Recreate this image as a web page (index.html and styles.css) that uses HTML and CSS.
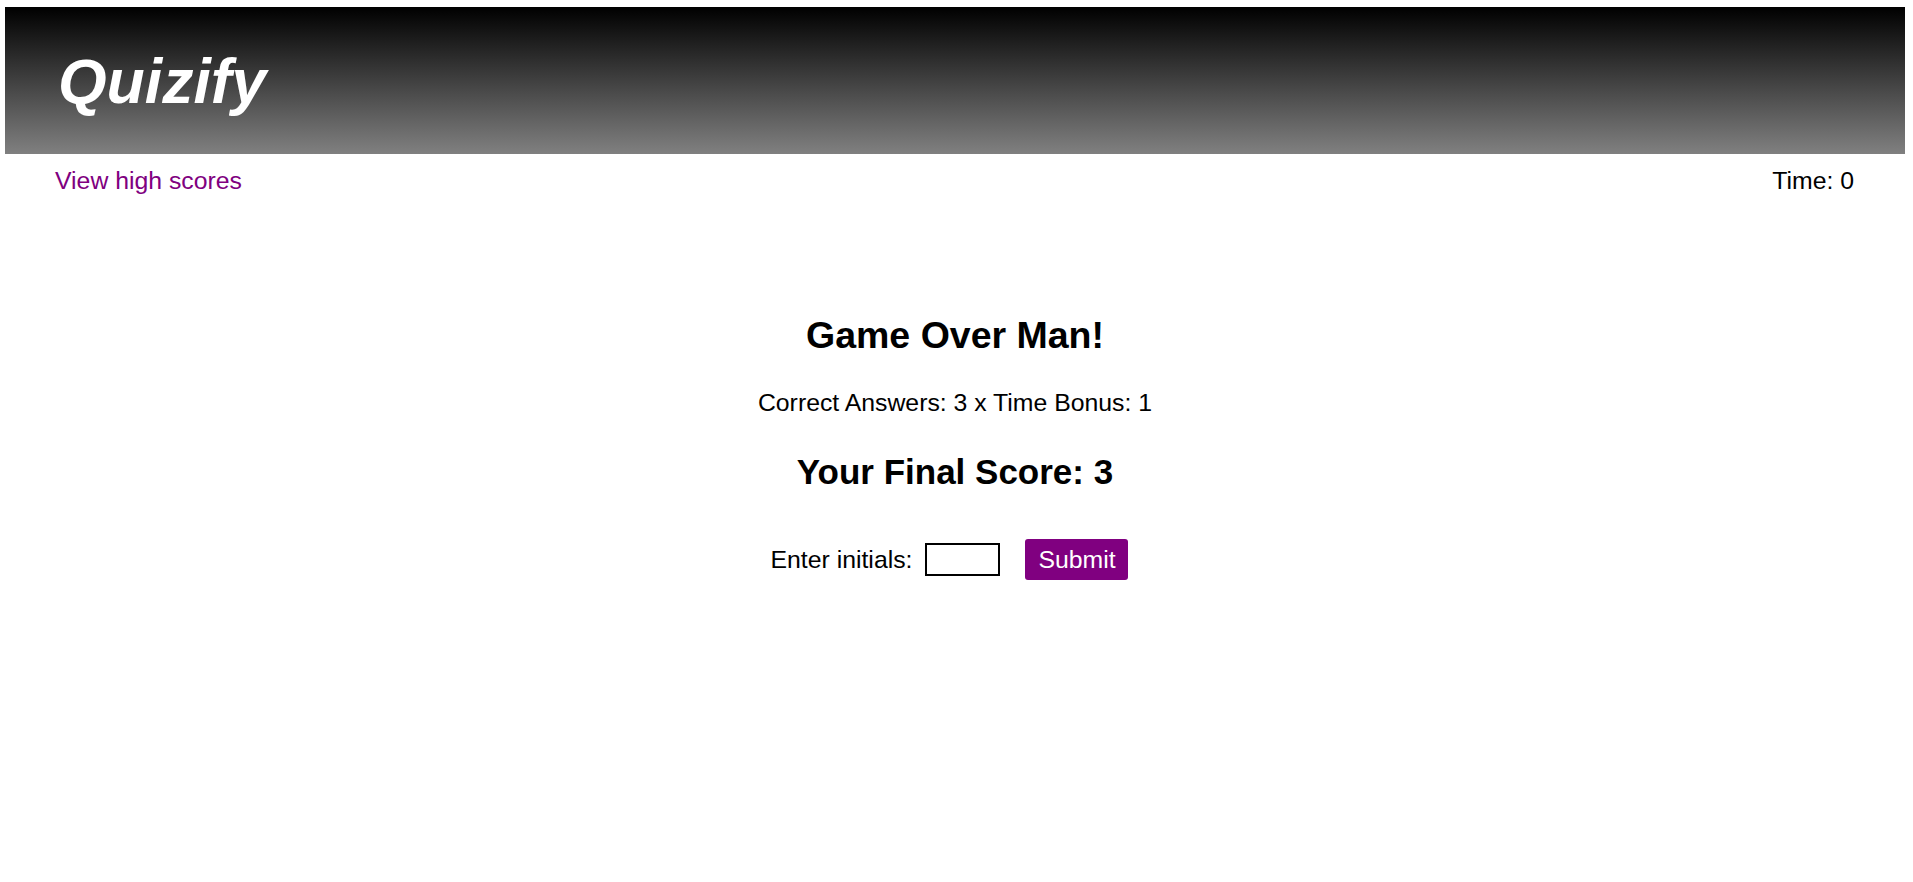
FILE: index.html
```html
<!DOCTYPE html>
<html lang="en">
<head>
<meta charset="utf-8">
<title>Quizify</title>
<link rel="stylesheet" href="styles.css">
</head>
<body>
<header class="site-header">
  <h1 class="brand">Quizify</h1>
</header>
<nav class="top-nav">
  <a class="scores-link" href="#">View high scores</a>
  <span class="timer">Time: 0</span>
</nav>
<main class="result">
  <h2 class="result-title">Game Over Man!</h2>
  <p class="result-detail">Correct Answers: 3 x Time Bonus: 1</p>
  <h3 class="result-score">Your Final Score: 3</h3>
  <form class="initials-form">
    <label class="initials-label" for="initials">Enter initials:</label>
    <input class="initials-input" id="initials" type="text">
    <button class="submit-btn" type="button">Submit</button>
  </form>
</main>
</body>
</html>
```
FILE: styles.css
```css
html, body {
  background: #fff;
}
body {
  margin: 7px 8px 0 5px;
  font-family: "Liberation Sans", Arial, sans-serif;
  font-size: 24.8px;
  color: #000;
}
.site-header {
  height: 147px;
  display: flex;
  align-items: center;
  padding: 0 53px;
  background: linear-gradient(#000000, #808080);
}
.brand {
  margin: 0;
  font-size: 62.5px;
  font-weight: bold;
  font-style: italic;
  color: #fff;
  line-height: normal;
}
.top-nav {
  display: flex;
  justify-content: space-between;
  padding: 13px 51px 0 50px;
  line-height: normal;
}
.scores-link {
  color: #800080;
  text-decoration: none;
}
.timer {
  color: #000;
}
.result {
  display: flex;
  flex-direction: column;
  align-items: center;
  padding-top: 119px;
}
.result-title {
  margin: 0;
  font-size: 37.5px;
  font-weight: bold;
  line-height: normal;
}
.result-detail {
  margin: 32px 0 0;
  line-height: normal;
}
.result-score {
  margin: 35px 0 0;
  font-size: 35px;
  font-weight: bold;
  line-height: normal;
}
.initials-form {
  display: flex;
  align-items: center;
  margin-top: 47px;
  padding-right: 11px;
}
.initials-label {
  margin-right: 13px;
}
.initials-input {
  box-sizing: border-box;
  width: 75px;
  height: 33px;
  border: 2px solid #000;
  border-radius: 0;
  padding: 0 4px;
  margin: 0 25px 0 0;
  font: inherit;
  outline: none;
}
.submit-btn {
  box-sizing: border-box;
  height: 41px;
  width: 103px;
  padding: 0;
  border: none;
  border-radius: 3px;
  background: #800080;
  color: #fff;
  font: inherit;
  line-height: normal;
  cursor: pointer;
}
```
